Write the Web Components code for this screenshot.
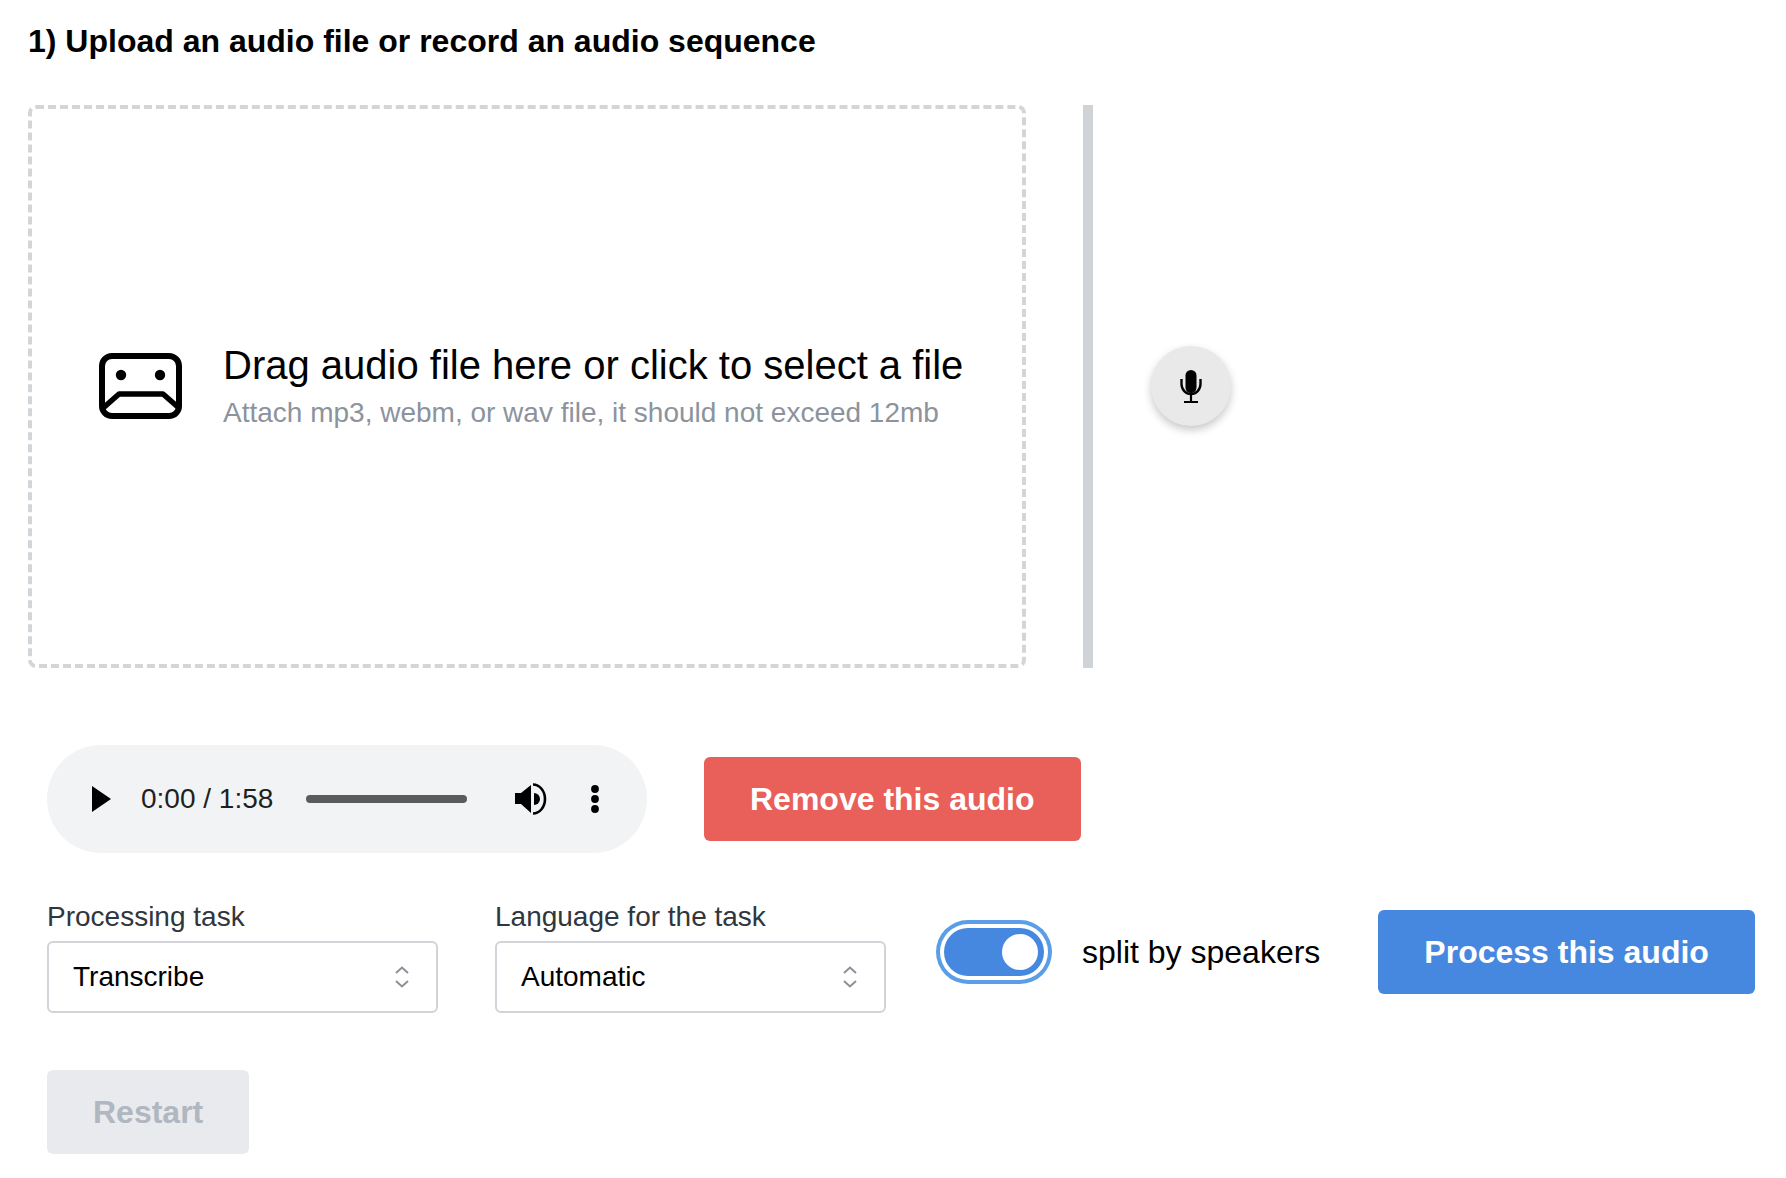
<!DOCTYPE html>
<html lang="en">
<head>
<meta charset="utf-8">
<title>Upload audio</title>
<style>
  html, body { margin: 0; background: #fff; }
  body { font-family: "Liberation Sans", Arial, sans-serif; color: #000; }
</style>
</head>
<body>
<audio-page></audio-page>

<script>
class UploadZone extends HTMLElement {
    constructor() {
        super();
        this.attachShadow({mode:'open'});
        this.shadowRoot.innerHTML = `
            <style>
                :host { display: flex; align-items: center; box-sizing: border-box; width: 998px; height: 563px;
                    border: 4px dashed #d2d6d9; border-radius: 8px; padding-left: 66px; }
                svg { flex: none; width: 85px; height: 68px; margin-right: 40px; }
                .text { margin-top: -2px; }
                .title { font-size: 40px; line-height: 48px; color: #000; }
                .hint { font-size: 28px; line-height: 36px; color: #8c939d; margin-top: 6px; }
            </style>
            <svg viewBox="0 0 85 68" fill="none" stroke="#000" stroke-width="6">
                <rect x="4" y="3" width="77" height="60" rx="10"/>
                <path d="M4 56 L21 41 H65 L81 55" stroke-width="5.5" stroke-linejoin="round"/>
                <circle cx="23" cy="22" r="5.2" fill="#000" stroke="none"/>
                <circle cx="62" cy="22" r="5.2" fill="#000" stroke="none"/>
            </svg>
            <div class="text">
                <div class="title"><slot name="title"></slot></div>
                <div class="hint"><slot name="hint"></slot></div>
            </div>
        `;
    }
}
customElements.define('upload-zone', UploadZone);

class MicButton extends HTMLElement {
    constructor() {
        super();
        this.attachShadow({mode:'open'});
        this.shadowRoot.innerHTML = `
            <style>
                :host { display: flex; align-items: center; justify-content: center; width: 80px; height: 80px;
                    margin-top: -2px; border-radius: 50%; background: #e9e9e9; box-shadow: 0 4px 8px rgba(0,0,0,.22); }
                svg { width: 28px; height: 36px; }
            </style>
            <svg viewBox="0 0 28 36" fill="none" stroke="#000">
                <rect x="8.5" y="2" width="11" height="23" rx="5.5" fill="#000" stroke="none"/>
                <path d="M4.5 11 V16 a9.5 10 0 0 0 19 0 V11" stroke-width="2.4"/>
                <path d="M14 26 V33.5" stroke-width="2.2"/>
                <path d="M7 34 H21" stroke-width="2"/>
            </svg>
        `;
    }
}
customElements.define('mic-button', MicButton);

class AudioBar extends HTMLElement {
    constructor() {
        super();
        this.attachShadow({mode:'open'});
        this.shadowRoot.innerHTML = `
            <style>
                :host { display: flex; align-items: center; box-sizing: border-box; width: 600px; height: 108px;
                    border-radius: 54px; background: #f1f3f4; padding-left: 44px; color: #1f1f1f; flex: none; }
                .play { width: 20px; height: 26px; margin-right: 30px; }
                .time { font-size: 28px; width: 165px; white-space: nowrap; }
                .track { width: 161px; height: 8px; border-radius: 4px; background: #5b5b5b; margin-right: 46px; }
                .vol { width: 34px; height: 34px; margin-right: 43px; }
                .more { width: 10px; height: 30px; }
            </style>
            <svg class="play" viewBox="0 0 20 26"><path d="M1 0 L20 13 L1 26 Z" fill="#000"/></svg>
            <span class="time"><slot></slot></span>
            <div class="track"></div>
            <svg class="vol" viewBox="0 0 34 34">
                <path d="M2 11 H8 L18 3 V31 L8 22 H2 Z" fill="#000"/>
                <path d="M21 11 a6 6 0 0 1 0 12 Z" fill="#000"/>
                <path d="M20 2.5 a12 14.5 0 0 1 0 29" fill="none" stroke="#000" stroke-width="2.6"/>
            </svg>
            <svg class="more" viewBox="0 0 10 30">
                <circle cx="5" cy="5" r="3.9"/><circle cx="5" cy="15" r="3.9"/><circle cx="5" cy="25" r="3.9"/>
            </svg>
        `;
    }
}
customElements.define('audio-bar', AudioBar);

class ActionButton extends HTMLElement {
    constructor() {
        super();
        this.attachShadow({mode:'open'});
        this.shadowRoot.innerHTML = `
            <style>
                :host { display: flex; align-items: center; justify-content: center; box-sizing: border-box;
                    height: 84px; padding: 0 46px; border-radius: 6px; flex: none;
                    font-size: 32px; font-weight: 700; color: #fff; background: #4688df; white-space: nowrap; }
                :host([variant="danger"]) { background: #e9605a; }
                :host([variant="disabled"]) { background: #e9eaee; color: #b0b7c0; }
            </style>
            <slot></slot>
        `;
    }
}
customElements.define('action-button', ActionButton);

class SelectField extends HTMLElement {
    constructor() {
        super();
        this.attachShadow({mode:'open'});
        this.shadowRoot.innerHTML = `
            <style>
                :host { display: block; width: 391px; flex: none; }
                .label { font-size: 28px; line-height: 32px; color: #30363d; margin-bottom: 8px; }
                .box { display: flex; align-items: center; justify-content: space-between; box-sizing: border-box;
                    height: 72px; padding: 0 27px 0 24px; border: 2.5px solid #d0d4d8; border-radius: 6px;
                    font-size: 28px; color: #000; }
                svg { width: 14px; height: 22px; }
            </style>
            <div class="label"></div>
            <div class="box">
                <span><slot></slot></span>
                <svg viewBox="0 0 14 22" fill="none" stroke="#8b9099" stroke-width="2">
                    <path d="M1 7 L7 1.5 L13 7"/><path d="M1 15 L7 20.5 L13 15"/>
                </svg>
            </div>
        `;
    }
    connectedCallback() {
        this.shadowRoot.querySelector('.label').textContent = this.getAttribute('label');
    }
}
customElements.define('select-field', SelectField);

class ToggleSwitch extends HTMLElement {
    constructor() {
        super();
        this.attachShadow({mode:'open'});
        this.shadowRoot.innerHTML = `
            <style>
                :host { display: flex; align-items: center; gap: 38px; height: 84px; flex: none;
                    font-size: 32px; color: #000; white-space: nowrap; }
                .track { display: flex; align-items: center; justify-content: flex-end; box-sizing: border-box;
                    width: 100px; height: 48px; margin-left: 8px; padding-right: 6px; border-radius: 24px;
                    background: #4688df; box-shadow: 0 0 0 4px #fff, 0 0 0 8px #5a9ee8; }
                .knob { width: 36px; height: 36px; border-radius: 50%; background: #fff; }
            </style>
            <div class="track"><div class="knob"></div></div>
            <span><slot></slot></span>
        `;
    }
}
customElements.define('toggle-switch', ToggleSwitch);

class AudioPage extends HTMLElement {
    constructor() {
        super();
        this.attachShadow({mode:'open'});
        this.shadowRoot.innerHTML = `
            <style>
                :host { display: block; box-sizing: border-box; width: 1786px; height: 1178px; padding: 23px 0 0 28px; }
                h2 { margin: 0 0 46px; font-size: 32px; line-height: 36px; font-weight: 700; color: #000; }
                .upload { display: flex; align-items: center; }
                .divider { width: 10px; height: 563px; background: #cfd3d7; margin: 0 58px 0 57px; }
                .rows { padding-left: 19px; }
                .player { display: flex; align-items: center; gap: 57px; margin-top: 77px; }
                .options { display: flex; align-items: flex-start; margin-top: 48px; }
                .options select-field + select-field { margin-left: 57px; }
                .options toggle-switch { margin: 9px 58px 0 50px; }
                .options action-button { margin-top: 9px; }
                .restart { display: flex; margin-top: 57px; }
            </style>
            <h2>1) Upload an audio file or record an audio sequence</h2>
            <div class="upload">
                <upload-zone>
                    <span slot="title">Drag audio file here or click to select a file</span>
                    <span slot="hint">Attach mp3, webm, or wav file, it should not exceed 12mb</span>
                </upload-zone>
                <div class="divider"></div>
                <mic-button></mic-button>
            </div>
            <div class="rows">
                <div class="player">
                    <audio-bar>0:00 / 1:58</audio-bar>
                    <action-button variant="danger">Remove this audio</action-button>
                </div>
                <div class="options">
                    <select-field label="Processing task">Transcribe</select-field>
                    <select-field label="Language for the task">Automatic</select-field>
                    <toggle-switch>split by speakers</toggle-switch>
                    <action-button>Process this audio</action-button>
                </div>
                <div class="restart">
                    <action-button variant="disabled">Restart</action-button>
                </div>
            </div>
        `;
    }
}
customElements.define('audio-page', AudioPage);
</script>
</body>
</html>
